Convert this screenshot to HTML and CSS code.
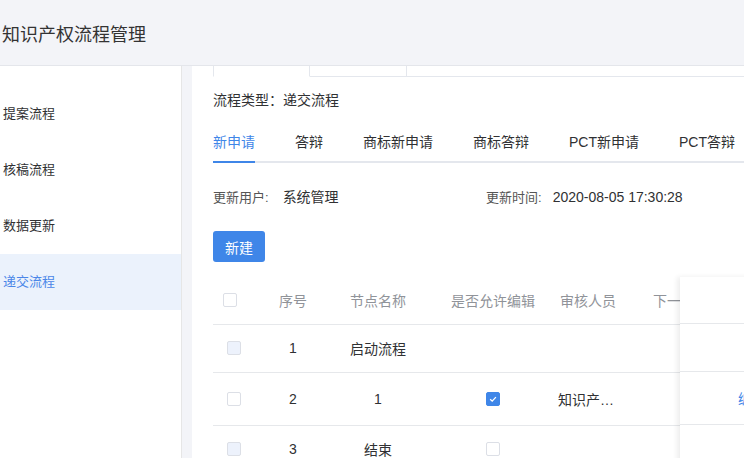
FILE: index.html
```html
<!DOCTYPE html>
<html lang="zh">
<head>
<meta charset="utf-8">
<title>知识产权流程管理</title>
<link rel="stylesheet" href="styles.css">
</head>
<body>
<div class="app">
  <header class="topbar"><h1 class="title">知识产权流程管理</h1></header>
  <div class="body">
    <aside class="sidebar">
      <ul class="menu">
        <li class="menu-item">提案流程</li>
        <li class="menu-item">核稿流程</li>
        <li class="menu-item">数据更新</li>
        <li class="menu-item active">递交流程</li>
      </ul>
    </aside>
    <main class="panel">
      <div class="cardtabs">
        <div class="ctab ctab-active"></div>
        <div class="ctab"></div>
        <div class="ctab-rest"></div>
      </div>
      <div class="flowtype">流程类型：递交流程</div>
      <nav class="tabs">
        <span class="tab active">新申请</span>
        <span class="tab">答辩</span>
        <span class="tab">商标新申请</span>
        <span class="tab">商标答辩</span>
        <span class="tab">PCT新申请</span>
        <span class="tab">PCT答辩</span>
      </nav>
      <div class="info">
        <div class="info-item info-user"><span class="label">更新用户:</span><span class="value value-user">系统管理</span></div>
        <div class="info-item"><span class="label">更新时间:</span><span class="value value-time">2020-08-05 17:30:28</span></div>
      </div>
      <button class="btn">新建</button>
      <div class="table-wrap">
        <table class="table">
          <colgroup>
            <col class="c-sel"><col class="c-no"><col class="c-name"><col class="c-edit"><col class="c-rev"><col class="c-next">
          </colgroup>
          <thead>
            <tr class="row-head">
              <th class="cell-sel-h"><span class="cb"></span></th>
              <th>序号</th>
              <th>节点名称</th>
              <th>是否允许编辑</th>
              <th class="left">审核人员</th>
              <th class="left next">下一</th>
            </tr>
          </thead>
          <tbody>
            <tr class="row1">
              <td class="cell-sel"><span class="cb cb-disabled"></span></td>
              <td>1</td>
              <td>启动流程</td>
              <td></td>
              <td class="left"></td>
              <td></td>
            </tr>
            <tr class="row2">
              <td class="cell-sel"><span class="cb"></span></td>
              <td>2</td>
              <td>1</td>
              <td><span class="cb cb-checked"><svg width="10" height="10" viewBox="0 0 10 10"><path d="M2.2 5.2 L4.2 7.1 L7.9 3.1" fill="none" stroke="#fff" stroke-width="1.3"/></svg></span></td>
              <td class="left">知识产…</td>
              <td></td>
            </tr>
            <tr class="row3">
              <td class="cell-sel"><span class="cb cb-disabled"></span></td>
              <td>3</td>
              <td>结束</td>
              <td><span class="cb"></span></td>
              <td class="left"></td>
              <td></td>
            </tr>
          </tbody>
        </table>
        <div class="fixed-col">
          <div class="fc-head"></div>
          <div class="fc-row1"></div>
          <div class="fc-row2"><span class="link">编辑</span></div>
          <div class="fc-row3"></div>
        </div>
      </div>
    </main>
  </div>
</div>
</body>
</html>
```
FILE: styles.css
```css
* { box-sizing: border-box; }
html, body { margin: 0; padding: 0; }
body {
  width: 744px;
  height: 458px;
  overflow: hidden;
  font-family: "Liberation Sans", "Noto Sans CJK SC", sans-serif;
  color: #303133;
  background: #f3f4f8;
}
.app { width: 744px; height: 458px; overflow: hidden; }
.topbar {
  height: 66px;
  background: #f3f4f8;
  border-bottom: 1px solid #e4e6eb;
  display: flex;
  align-items: center;
}
.title {
  margin: 0 0 0 2px;
  font-size: 18px;
  font-weight: normal;
  color: #333;
  line-height: 24px;
  padding-top: 4px;
}
.body {
  display: flex;
  height: 392px;
  width: 900px;
}
.sidebar {
  width: 182px;
  flex: none;
  background: #fff;
  border-right: 1px solid #e6e6e6;
}
.menu { list-style: none; margin: 0; padding: 20px 0 0; }
.menu-item {
  height: 56px;
  line-height: 56px;
  padding-left: 3px;
  font-size: 13px;
  color: #303133;
}
.menu-item.active { background: #ebf2fc; color: #4a86e8; }
.panel {
  margin-left: 10px;
  flex: 1;
  background: #fff;
  padding-left: 21px;
  position: relative;
}
.cardtabs { display: flex; height: 11px; }
.ctab { width: 97px; border-right: 1px solid #e4e7ed; border-bottom: 1px solid #e4e7ed; }
.ctab-active { border-left: 1px solid #e4e7ed; border-bottom-color: transparent; }
.ctab-rest { flex: 1; border-bottom: 1px solid #e4e7ed; }
.flowtype {
  margin-top: 13px;
  font-size: 14px;
  line-height: 20px;
  color: #303133;
}
.tabs {
  margin-top: 13px;
  height: 40px;
  display: flex;
  border-bottom: 2px solid #e4e7ed;
  width: 600px;
}
.tab {
  padding: 0 20px;
  font-size: 14px;
  line-height: 38px;
  color: #303133;
  position: relative;
}
.tab:first-child { padding-left: 0; }
.tab.active { color: #3f86e8; }
.tab.active::after {
  content: "";
  position: absolute;
  left: 0; right: 20px; bottom: -2px;
  height: 2px;
  background: #3f86e8;
}
.info {
  margin-top: 24px;
  display: flex;
  line-height: 20px;
}
.info-item { display: flex; align-items: baseline; }
.info-user { width: 273px; }
.label { font-size: 13px; color: #555; }
.value { font-size: 14px; color: #303133; }
.value-user { margin-left: 14px; }
.value-time { margin-left: 11px; }
.btn {
  display: block;
  margin-top: 23px;
  width: 52px;
  height: 31px;
  border: none;
  border-radius: 3px;
  background: #3f86e8;
  color: #fff;
  font-family: inherit;
  font-size: 14px;
  padding: 0;
}
.table-wrap {
  margin-top: 15px;
  position: relative;
  width: 560px;
}
.table {
  border-collapse: collapse;
  table-layout: fixed;
  width: 520px;
  font-size: 14px;
}
.c-sel { width: 47px; }
.c-no { width: 66px; }
.c-name { width: 104px; }
.c-edit { width: 126px; }
.c-rev { width: 92px; }
.c-next { width: 85px; }
.table th, .table td {
  padding: 0;
  text-align: center;
  border-bottom: 1px solid #e6e8eb;
  white-space: nowrap;
  overflow: hidden;
}
.table th { font-weight: normal; color: #909399; height: 47px; font-size: 14px; }
.table td { color: #303133; }
.row1 td { height: 48px; }
.row2 td { height: 53px; }
.row3 td { height: 48px; }
.table th.left { text-align: left; padding-left: 4px; }
.table td.left { text-align: left; padding-left: 2px; }
.table th.next { padding-left: 5px; }
.cell-sel-h { text-align: left !important; padding-left: 10px !important; }
.cell-sel { text-align: left !important; padding-left: 14px !important; }
.cb {
  display: inline-block;
  width: 14px;
  height: 14px;
  border: 1px solid #dcdfe6;
  border-radius: 2px;
  background: #fff;
  vertical-align: middle;
  position: relative;
  top: -1px;
}
.cb-disabled { background: #edf2fc; }
.cb-checked {
  background: #3f86e8;
  border-color: #3f86e8;
  display: inline-flex;
  align-items: center;
  justify-content: center;
}
.fixed-col {
  position: absolute;
  top: 0;
  left: 467px;
  width: 120px;
  height: 200px;
  background: #fff;
  box-shadow: -3px 0 5px rgba(0,0,0,0.07);
}
.fixed-col > div { border-bottom: 1px solid #e6e8eb; display: flex; align-items: center; padding-left: 58px; }
.fc-head { height: 47px; }
.fc-row1 { height: 48px; }
.fc-row2 { height: 53px; }
.fc-row3 { height: 48px; }
.link { color: #3f86e8; font-size: 14px; }
```
